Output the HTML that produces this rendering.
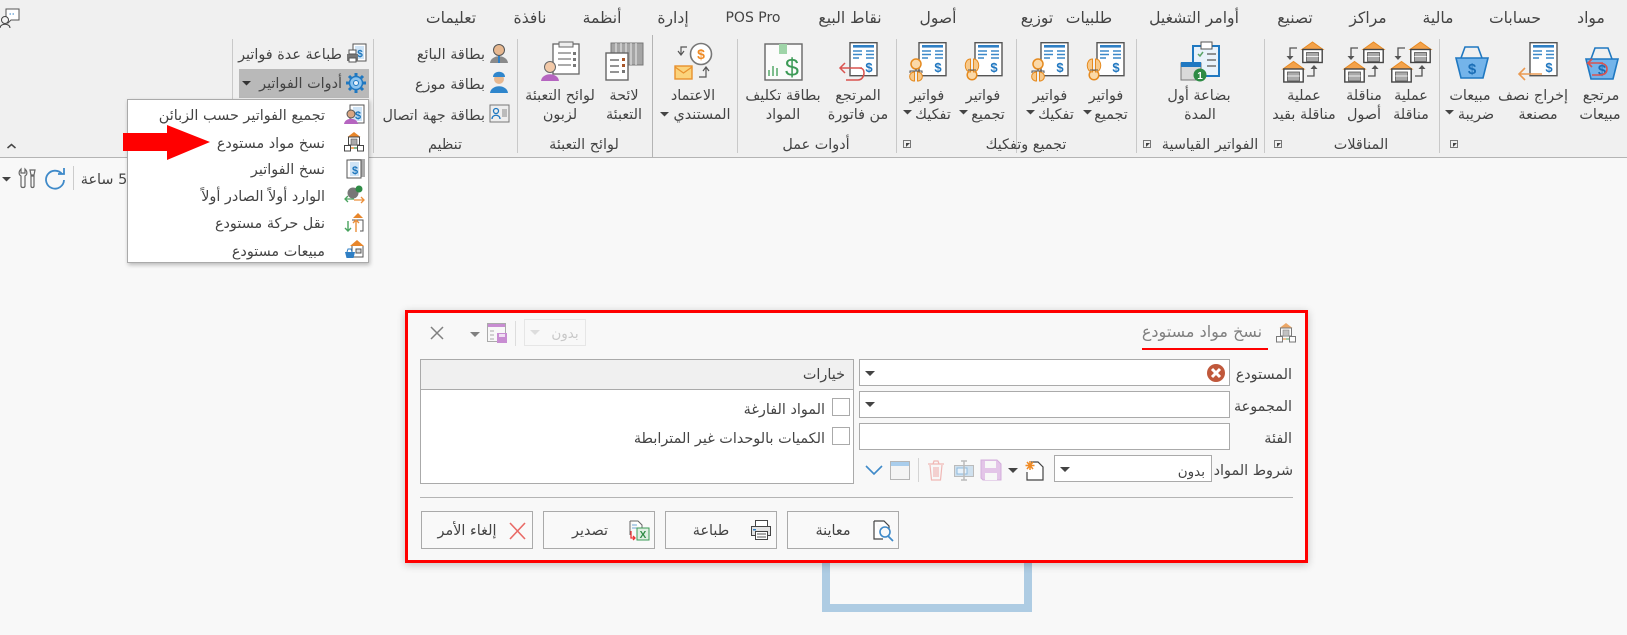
<!DOCTYPE html>
<html lang="ar"><head><meta charset="utf-8"><title>نسخ مواد مستودع</title>
<style>
html,body{margin:0;padding:0;background:#f8f8f8}
body{position:relative;width:1627px;height:635px;overflow:hidden;font-family:"DejaVu Sans","Liberation Sans",sans-serif;font-size:14.4px;color:#444}
.a{position:absolute;box-sizing:border-box}
.c{position:absolute;width:160px;margin-left:-80px;margin-top:-8px;text-align:center;line-height:18px;white-space:nowrap;direction:rtl}
.r{position:absolute;margin-top:-8px;line-height:18px;white-space:nowrap;direction:rtl;text-align:right}
.s{position:absolute;width:1px;top:39px;height:114px;background:#c9c9c9}
.f{position:absolute;box-sizing:border-box;background:#fff;border:1px solid #aaa}
.b{position:absolute;box-sizing:border-box;top:511px;height:38px;border:1px solid #aaa;background:#f9f9f9}
svg{position:absolute;left:0;top:0;overflow:visible}
</style></head><body>
<!-- ribbon -->
<div class="a" style="left:0;top:0;width:1627px;height:158px;background:#f0f0f0;border-bottom:1px solid #b4b4b4"></div>
<div class="a" style="left:822px;top:560px;width:210px;height:52px;background:#f9f9f9;border:8px solid #aecce3;border-top:0"></div>
<div class="s" style="left:1439px"></div><div class="s" style="left:1264px"></div><div class="s" style="left:1136px"></div><div class="s" style="left:1016px"></div><div class="s" style="left:896px"></div><div class="s" style="left:737px"></div><div class="s" style="left:652px;top:35px;height:122px;background:#b4b4b4"></div><div class="s" style="left:517px"></div><div class="s" style="left:373px"></div><div class="s" style="left:232px"></div>
<div class="a" style="left:239px;top:69px;width:130px;height:29px;background:#b9b9b9"></div>

<!-- menu -->
<div style="font-size:15.6px;color:#444">
<div class="c" style="left:1591px;top:17px">مواد</div><div class="c" style="left:1515px;top:17px">حسابات</div><div class="c" style="left:1438px;top:17px">مالية</div><div class="c" style="left:1368px;top:17px">مراكز</div><div class="c" style="left:1295px;top:17px">تصنيع</div><div class="c" style="left:1194px;top:17px">أوامر التشغيل</div><div class="c" style="left:1089px;top:17px">طلبيات</div><div class="c" style="left:1037px;top:17px">توزيع</div><div class="c" style="left:938px;top:17px">أصول</div><div class="c" style="left:850px;top:17px">نقاط البيع</div><div class="c" style="left:753px;top:17px;direction:ltr;font-size:14px">POS Pro</div><div class="c" style="left:673px;top:17px">إدارة</div><div class="c" style="left:602px;top:17px">أنظمة</div><div class="c" style="left:530px;top:17px">نافذة</div><div class="c" style="left:451px;top:17px">تعليمات</div>
</div>

<!-- ribbon labels -->
<div class="c" style="left:1601px;top:95px">مرتجع</div><div class="c" style="left:1600px;top:114px">مبيعات</div>
<div class="c" style="left:1533px;top:95px">إخراج نصف</div><div class="c" style="left:1538px;top:114px">مصنعة</div>
<div class="c" style="left:1470px;top:95px">مبيعات</div><div class="c" style="left:1476px;top:114px">ضريبة</div>
<div class="c" style="left:1411px;top:95px">عملية</div><div class="c" style="left:1411px;top:114px">مناقلة</div>
<div class="c" style="left:1364px;top:95px">مناقلة</div><div class="c" style="left:1364px;top:114px">أصول</div>
<div class="c" style="left:1304px;top:95px">عملية</div><div class="c" style="left:1304px;top:114px">مناقلة بقيد</div>
<div class="c" style="left:1199px;top:95px">بضاعة أول</div><div class="c" style="left:1200px;top:114px">المدة</div>
<div class="c" style="left:1106px;top:95px">فواتير</div><div class="c" style="left:1111px;top:114px">تجميع</div>
<div class="c" style="left:1050px;top:95px">فواتير</div><div class="c" style="left:1056px;top:114px">تفكيك</div>
<div class="c" style="left:983px;top:95px">فواتير</div><div class="c" style="left:988px;top:114px">تجميع</div>
<div class="c" style="left:927px;top:95px">فواتير</div><div class="c" style="left:933px;top:114px">تفكيك</div>
<div class="c" style="left:858px;top:95px">المرتجع</div><div class="c" style="left:858px;top:114px">من فاتورة</div>
<div class="c" style="left:783px;top:95px">بطاقة تكليف</div><div class="c" style="left:783px;top:114px">المواد</div>
<div class="c" style="left:693px;top:95px">الاعتماد</div><div class="c" style="left:702px;top:114px">المستندي</div>
<div class="c" style="left:624px;top:95px">لائحة</div><div class="c" style="left:624px;top:114px">التعبئة</div>
<div class="c" style="left:560px;top:95px">لوائح التعبئة</div><div class="c" style="left:560px;top:114px">لزبون</div>
<div class="c" style="left:1210px;top:144px">الفواتير القياسية</div>
<div class="c" style="left:1361px;top:144px">المناقلات</div>
<div class="c" style="left:1026px;top:144px">تجميع وتفكيك</div>
<div class="c" style="left:816px;top:144px">أدوات عمل</div>
<div class="c" style="left:584px;top:144px">لوائح التعبئة</div>
<div class="c" style="left:445px;top:144px">تنظيم</div>
<div class="r" style="right:1142px;top:54px">بطاقة البائع</div>
<div class="r" style="right:1142px;top:84px">بطاقة موزع</div>
<div class="r" style="right:1142px;top:115px">بطاقة جهة اتصال</div>
<div class="r" style="right:1285px;top:54px">طباعة عدة فواتير</div>
<div class="r" style="right:1285px;top:83px">أدوات الفواتير</div>
<div class="c" style="left:104px;top:179px">5 ساعة</div>

<!-- dialog -->
<div class="a" style="left:405px;top:310px;width:903px;height:253px;border:3px solid #f00;background:#f8f8f8;box-shadow:0 2px 8px rgba(0,0,0,.22)"></div>
<div class="a" style="left:1142px;top:348px;width:126px;height:2px;background:#f00"></div>
<div class="c" style="left:1202px;top:331px;font-size:16px;color:#808080">نسخ مواد مستودع</div>
<div class="f" style="left:524px;top:319px;width:62px;height:27px;background:#f8f8f8;border-color:#e6e6e6"></div>
<div class="c" style="left:565px;top:333px;color:#c8c8c8;font-size:13.5px">بدون</div>
<div class="a" style="left:515px;top:321px;width:1px;height:25px;background:#ddd"></div>

<div class="f" style="left:859px;top:359px;width:371px;height:27px"></div>
<div class="f" style="left:859px;top:391px;width:371px;height:27px"></div>
<div class="f" style="left:859px;top:423px;width:371px;height:27px"></div>
<div class="f" style="left:1054px;top:455px;width:158px;height:27px"></div>
<div class="r" style="right:335px;top:374px">المستودع</div>
<div class="r" style="right:335px;top:406px">المجموعة</div>
<div class="r" style="right:335px;top:438px">الفئة</div>
<div class="r" style="right:334px;top:470px">شروط المواد</div>
<div class="r" style="right:422px;top:471px;font-size:13.5px">بدون</div>

<div class="f" style="left:420px;top:359px;width:434px;height:125px"></div>
<div class="a" style="left:421px;top:360px;width:432px;height:30px;background:#f0f0f0;border-bottom:1px solid #aaa"></div>
<div class="r" style="right:782px;top:374px">خيارات</div>
<div class="f" style="left:832px;top:398px;width:18px;height:18px"></div>
<div class="f" style="left:832px;top:427px;width:18px;height:18px"></div>
<div class="r" style="right:802px;top:409px">المواد الفارغة</div>
<div class="r" style="right:802px;top:438px">الكميات بالوحدات غير المترابطة</div>

<div class="a" style="left:420px;top:497px;width:873px;height:1px;background:#b4b4b4"></div>
<div class="b" style="left:421px;width:112px"></div><div class="b" style="left:543px;width:112px"></div><div class="b" style="left:665px;width:112px"></div><div class="b" style="left:787px;width:112px"></div>
<div class="c" style="left:467px;top:530px">إلغاء الأمر</div>
<div class="c" style="left:590px;top:530px">تصدير</div>
<div class="c" style="left:711px;top:530px">طباعة</div>
<div class="c" style="left:833px;top:530px">معاينة</div>

<!-- popup -->
<div class="a" style="left:127px;top:99px;width:242px;height:164px;background:#fff;border:1px solid #aaa;box-shadow:1px 2px 4px rgba(0,0,0,.25)"></div>
<div class="r" style="right:1302px;top:115px">تجميع الفواتير حسب الزبائن</div>
<div class="r" style="right:1302px;top:143px">نسخ مواد مستودع</div>
<div class="r" style="right:1302px;top:169px">نسخ الفواتير</div>
<div class="r" style="right:1302px;top:196px">الوارد أولاً الصادر أولاً</div>
<div class="r" style="right:1302px;top:223px">نقل حركة مستودع</div>
<div class="r" style="right:1302px;top:251px">مبيعات مستودع</div>

<!-- icons -->
<svg width="1627" height="635" viewBox="0 0 1627 635" fill="none">
<defs>
<g id="inv"><rect x="10" y=".7" width="27" height="33" fill="#fff" stroke="#555" stroke-width="1.4"/><rect x="13" y="3" width="21" height="2.6" fill="#2f7fc4"/><path d="M13 9h9M13 12.500h9M13 16h6M26 9h8M26 12.500h8M26 16h8" stroke="#3b88c8" stroke-width="1.500"/><text x="29" y="30" font-size="13" font-weight="bold" fill="#2077c0" text-anchor="middle" font-family="Liberation Sans">$</text></g>
<g id="bask"><path d="M6 12 10 1h13l4 11" stroke="#1f78c1" stroke-width="1.600"/><path d="M1 12h32l-5 20H6z" fill="#74b4ea" stroke="#1f78c1" stroke-width="1.600"/><text x="17" y="28" font-size="15" font-weight="bold" fill="#1a6db5" text-anchor="middle" font-family="Liberation Sans">$</text></g>
<g id="house"><path d="M0 7.500 10.500 0 21 7.500z" fill="#f3a24a" stroke="#e88a22"/><rect x=".8" y="7.500" width="19.400" height="13" fill="#fff" stroke="#444" stroke-width="1.400"/><rect x="4.500" y="10.500" width="12" height="9" fill="#a9a9a9" stroke="#555" stroke-width=".8"/><path d="M4.500 14.500h12" stroke="#eee"/></g>
<g id="wh"><use href="#house" x="19" y="0"/><use href="#house" x="0" y="19.500"/><path d="M14 6H7v9" stroke="#555" stroke-width="1.300"/><path d="M3.500 14h7L7 18z" fill="#555"/><path d="M24 34h7v-8" stroke="#555" stroke-width="1.300"/><path d="M27.500 27h7L31 23z" fill="#555"/></g>
<g id="sc1"><circle cx="7" cy="33" r="4.800" fill="#fbd9a8" stroke="#e58a1f" stroke-width="1.500"/><path d="M5.500 30c-7 0-7-13 0-13zM8.500 30c7 0 7-13 0-13z" fill="#f8c98a" stroke="#e58a1f"/><path d="M3 28h8" stroke="#555"/></g>
<g id="sc2"><circle cx="7" cy="22" r="5" fill="#fbd9a8" stroke="#e58a1f" stroke-width="1.500"/><path d="M5.500 39c-6.500 0-6.500-9 0-9zM8.500 39c6.500 0 6.500-9 0-9z" fill="#f8c98a" stroke="#e58a1f"/><path d="M7 27v2M1 31v-2h12v2" stroke="#555"/></g>
<g id="tri"><path d="M0 0h9l-4.500 4.500z" fill="#444"/></g>
<g id="lau"><rect x=".5" y=".5" width="7" height="7" stroke="#777"/><path d="M3 7V3h4z" fill="#444"/></g>
<g id="small"><rect x="5" y="1" width="14" height="18" fill="#fff" stroke="#555"/><rect x="8" y="3" width="9" height="14" fill="#cfe4f6"/><text x="13" y="15" font-size="11" font-weight="bold" fill="#1b75bc" text-anchor="middle" font-family="Liberation Sans">$</text></g>
</defs>

<!-- top-left user -->
<path d="M6 9h13v11H11l-3 3v-3H6z" fill="#fff" stroke="#555"/><path d="M9.500 14h6" stroke="#2f7fc4" stroke-dasharray="1.500 1.500"/><circle cx="5" cy="20" r="3.500" fill="#f4f4f4" stroke="#444"/><path d="M0 28c0-5 10-5 10 0" stroke="#444"/>

<!-- ribbon icons -->
<use href="#bask" x="1585" y="47"/><path d="M1603 63h-15l4-4m-4 4 4 4M1598 63c7 0 9 3 9 6 0 4-3 6-8 6h-7" stroke="#d9534f" stroke-width="1.600"/>
<use href="#inv" x="1520" y="42"/><path d="M1542 74h-22m5-6-6 6 6 6" stroke="#ea9a52" stroke-width="1.600"/>
<use href="#bask" x="1455" y="46"/>
<use href="#wh" x="1391" y="42"/><use href="#wh" x="1344" y="42"/><use href="#wh" x="1283" y="42"/>
<rect x="1193" y="46" width="26" height="30" fill="#e8f2fb" stroke="#1f78c1" stroke-width="2"/><rect x="1201" y="42" width="11" height="7" fill="#fff" stroke="#555"/><path d="M1198 54l2 2 3-4" stroke="#5aa469" stroke-width="1.500"/><path d="M1207 54h9M1207 60h9M1207 66h9" stroke="#555" stroke-width="1.200"/><rect x="1181" y="63" width="20" height="17" fill="#d9d9d9" stroke="#777"/><rect x="1181" y="62" width="20" height="5" fill="#1f78c1"/><circle cx="1200" cy="75" r="6.500" fill="#2e8b45"/><text x="1200" y="79" font-size="10" font-weight="bold" fill="#fff" text-anchor="middle" font-family="Liberation Sans">1</text>
<use href="#inv" x="1087" y="42"/><use href="#sc1" x="1087" y="42"/>
<use href="#inv" x="1031" y="42"/><use href="#sc2" x="1031" y="42"/>
<use href="#inv" x="965" y="42"/><use href="#sc1" x="965" y="42"/>
<use href="#inv" x="909" y="42"/><use href="#sc2" x="909" y="42"/>
<use href="#inv" x="840" y="42"/><path d="M862 68h-21m4-5-5 5 5 5M850 68h9c4 0 5 2 5 5s-2 7-6 7h-12" stroke="#d9534f" stroke-width="1.500"/>
<rect x="765" y="44" width="37" height="36" fill="#fbfbfb" stroke="#666" stroke-width="1.400"/><rect x="779" y="44" width="8" height="10" fill="#9fd4a8"/><path d="M769 76v-6M773 76v-10M777 76v-8" stroke="#4aa35f" stroke-width="1.400"/><text x="792" y="76" font-size="25" fill="#3c9a56" text-anchor="middle" font-family="Liberation Sans">$</text>
<circle cx="701" cy="54" r="10.500" fill="#fff" stroke="#777" stroke-width="1.600"/><text x="701" y="59" font-size="14" font-weight="bold" fill="#ef8a24" text-anchor="middle" font-family="Liberation Sans">$</text><rect x="675" y="66" width="17" height="13" fill="#fbd37c" stroke="#e8912d" stroke-width="1.400"/><path d="M675 67l8.500 6 8.500-6" stroke="#e8912d" stroke-width="1.200"/><path d="M687 47h-6v7M678 51l3 4 3-4M699 77h7v-9M703 71l3-4 3 4" stroke="#555" stroke-width="1.200"/>
<rect x="611" y="43" width="32" height="22" fill="#a5a5a5" stroke="#777"/><path d="M616 43v22M621 43v22M626 43v22M631 43v22M636 43v22" stroke="#eee"/><rect x="606" y="53" width="22" height="27" fill="#fff" stroke="#666" stroke-width="1.400"/><path d="M610 60h9M610 66h9M610 72h9" stroke="#555" stroke-width="1.200"/><path d="M622 58h3v3h-3zM622 64h3v3h-3z" fill="#a8562a"/><path d="M622 70h3v3h-3z" fill="#777"/>
<rect x="553" y="44" width="26" height="30" fill="#fff" stroke="#666" stroke-width="1.300"/><rect x="559" y="42" width="14" height="5" fill="#eee" stroke="#666"/><path d="M558 53h13M558 59h13M558 65h13" stroke="#555"/><path d="M573 52h3v3h-3zM573 58h3v3h-3zM573 64h3v3h-3z" fill="#777"/>
<circle cx="550" cy="67" r="5.500" fill="#f2c9a8" stroke="#666"/><path d="M541 81c1-9 17-9 18 0z" fill="#b565c0"/>
<circle cx="499" cy="50" r="5.500" fill="#e7b890" stroke="#555"/><path d="M490 63c1-9 17-9 18 0z" fill="#8a8a8a"/><path d="M499 56v7" stroke="#2f7fc4" stroke-width="2"/>
<circle cx="499" cy="79" r="5" fill="#e7b890"/><path d="M493 77c0-7 12-7 12 0z" fill="#2f86cc"/><path d="M490 93c1-9 17-9 18 0z" fill="#2f86cc"/>
<rect x="490" y="105" width="19" height="17" fill="#eee" stroke="#777"/><circle cx="496" cy="111" r="2.500" stroke="#1f78c1" stroke-width="1.300"/><path d="M492 119c0-5 8-5 8 0" stroke="#1f78c1" stroke-width="1.300"/><rect x="502" y="109" width="5" height="8" fill="#bbb"/>
<rect x="353" y="44" width="13" height="17" fill="#fff" stroke="#555"/><rect x="355" y="46" width="9" height="13" fill="#cfe4f6"/><text x="360" y="57" font-size="10" font-weight="bold" fill="#1b75bc" text-anchor="middle" font-family="Liberation Sans">$</text><rect x="347" y="54" width="11" height="7" fill="#777"/><rect x="349" y="50" width="7" height="4" fill="#fff" stroke="#555"/><rect x="349" y="58" width="7" height="4" fill="#fff" stroke="#555"/>
<g transform="translate(356 83)"><circle r="6.500" fill="#8cc3ee" stroke="#1f78c1" stroke-width="1.500"/><circle r="2.500" fill="#e8f2fb" stroke="#1f78c1"/><path d="M0-10V-7M0 10V7M-10 0H-7M10 0H7M-7-7l2 2M7 7 5 5M-7 7l2-2M7-7 5-5" stroke="#1f78c1" stroke-width="3"/></g>
<!-- ribbon arrows + launchers -->
<use href="#tri" x="1445" y="110"/><use href="#tri" x="1083" y="110"/><use href="#tri" x="1026" y="110"/><use href="#tri" x="959" y="110"/><use href="#tri" x="903" y="110"/><use href="#tri" x="660" y="112"/>
<path d="M242 81h9l-4.500 4.500z" fill="#333"/>
<use href="#lau" x="1450" y="140"/><use href="#lau" x="1274" y="140"/><use href="#lau" x="1143" y="140"/><use href="#lau" x="903" y="140"/>
<path d="M7.500 148l4-3.500 4 3.500" stroke="#444" stroke-width="1.500"/>
<!-- status row -->
<path d="M2 177h9l-4.500 4.500z" fill="#444"/><path d="M21 169c-3 3-2 6 0 7v10c0 2 4 2 4 0v-10c2-1 3-4 0-7v4h-4zM30 170h5l-1 5h-3zM31 176h3v10c0 2-3 2-3 0z" stroke="#666" stroke-width="1.200"/>
<path d="M62 174a9 9 0 1 0 2 6" stroke="#3f8ac9" stroke-width="1.800"/><path d="M58 174h6v-6" stroke="#3f8ac9" stroke-width="1.800"/><rect x="73" y="166" width="1" height="24" fill="#ccc"/>
<!-- popup icons -->
<g transform="translate(345 104)"><use href="#small" x="0" y="0"/><circle cx="6" cy="10" r="4" fill="#d8a582" stroke="#555"/><path d="M-1 20c1-7 13-7 14 0z" fill="#b565c0"/></g>
<g id="copywh" transform="translate(344 132)"><path d="M3.500 5 10 0l6.500 5z" fill="#e8862a"/><rect x="4.500" y="5" width="11" height="8" fill="#fff" stroke="#444"/><rect x="7" y="7" width="6" height="6" fill="#aaa" stroke="#555" stroke-width=".6"/><rect x=".5" y="13.500" width="6" height="5.500" fill="#fff" stroke="#444"/><rect x="13.500" y="13.500" width="6" height="5.500" fill="#fff" stroke="#444"/><path d="M7 16h3" stroke="#ea8f3a" stroke-width="1.500"/><path d="M10 16h3" stroke="#5aa469" stroke-width="1.500"/></g>
<g transform="translate(344 158)"><rect x="6" y="1" width="15" height="18" fill="#aaa"/><use href="#small" x="-2" y="1"/></g>
<g transform="translate(344 185)"><circle cx="9" cy="8" r="5.500" fill="#777"/><circle cx="15" cy="4" r="3.500" fill="#2e8b45"/><path d="M10 14H1m3-3-3 3 3 3" stroke="#4aa35f" stroke-width="1.300"/><path d="M10 15h10m-3-3 3 3-3 3" stroke="#ea8f3a" stroke-width="1.300"/></g>
<g transform="translate(344 212)"><path d="M9 6l5-5 5 5" fill="#e8862a"/><path d="M8 8h11v11h-3" stroke="#555"/><path d="M4 9v10m-3-3 3 3 3-3" stroke="#4aa35f" stroke-width="1.400"/><path d="M12 20V8m-3 3 3-3 3 3" stroke="#ea8f3a" stroke-width="1.400"/></g>
<g transform="translate(344 239)"><path d="M6 7l7-6 7 6z" fill="#e8862a"/><path d="M8 7v11h11V7" stroke="#555"/><rect x="12" y="10" width="5" height="4" fill="#ddd" stroke="#555"/><path d="M1 13h10l-1.500 6h-7z" fill="#2f7fc4"/><path d="M3 13l1-3h3l1 3" stroke="#2f7fc4"/></g>
<path d="M123 133h44v-8l43 17-43 18v-9h-44z" fill="#f00"/>
<!-- dialog icons -->
<g transform="translate(1276 323)" opacity=".7"><use href="#copywh" x="-344" y="-132"/></g>
<path d="M431 327l12 12M443 327l-12 12" stroke="#808080" stroke-width="1.500"/>
<path d="M470 332h10l-5 5z" fill="#808080"/>
<rect x="487.500" y="323.500" width="18" height="18" fill="#f8f8f8" stroke="#aaa"/><rect x="488" y="324" width="17" height="3" fill="#c88dd2"/><path d="M490 331h4M490 335h4M490 339h4" stroke="#aaa"/><rect x="497" y="333" width="10" height="10" fill="#c88dd2"/><rect x="499" y="334" width="6" height="3" fill="#f0dff3"/>
<path d="M530 330h10l-5 5z" fill="#ddd"/>
<circle cx="1216" cy="373" r="9" fill="#c0583b"/><path d="M1212 369l8 8M1220 369l-8 8" stroke="#fff" stroke-width="3"/>
<path d="M865 371h10l-5 5zM865 402h10l-5 5zM1060 467h10l-5 5z" fill="#444"/>
<path d="M1031 462h7l5 5v13h-16v-8" fill="#fff" stroke="#444" stroke-width="1.200"/><path d="M1030 461v9M1025.500 465.500h9M1027 462l6 7M1033 462l-6 7" stroke="#ef8a24" stroke-width="1.500"/>
<path d="M1008 468h10l-5 5z" fill="#444"/>
<path d="M981 460h16l4 4v16h-18l-2-2z" fill="#e3c5e8" stroke="#d3aedb"/><rect x="985" y="461" width="11" height="7" fill="#f7f7f7"/><rect x="985" y="473" width="12" height="7" fill="#f7f7f7"/>
<rect x="954.500" y="465.500" width="19" height="11" fill="#cfe0ee" stroke="#bbb"/><rect x="957" y="468" width="10" height="6" fill="#e8f2fb" stroke="#8fbadc"/><path d="M964 461v19M961 461h6M961 480h6" stroke="#bbb" stroke-width="1.500"/>
<path d="M930 465l1.500 15h9l1.500-15M928 464h16M933 464l1-3h4l1 3M934 467v10M936 467v10M938 467v10" stroke="#f0b7b5" stroke-width="1.200"/>
<rect x="918" y="458" width="1" height="24" fill="#d4d4d4"/>
<rect x="890.500" y="461.500" width="19" height="18" fill="#f4f4f4" stroke="#b5b5b5"/><rect x="891" y="462" width="18" height="4" fill="#a9cdec"/>
<path d="M866 466l8 8 8-8" stroke="#3f8ac9" stroke-width="1.600"/>
<path d="M510 523l15 16M525 523l-15 16" stroke="#e96a66" stroke-width="1.600"/>
<path d="M630 521h8l4 4v3" stroke="#666" fill="#fff"/><path d="M630 521v14" stroke="#666"/><path d="M632 525h5M632 528h5" stroke="#6fa8d8"/><path d="M631 531v7h4m-2-2 2 2-2 2" stroke="#e33" stroke-width="1.300"/><rect x="637" y="528" width="12" height="12" fill="#dff0e3" stroke="#3c9a56"/><text x="643" y="538" font-size="10" font-weight="bold" fill="#2e8b45" text-anchor="middle" font-family="Liberation Sans">X</text>
<rect x="755.500" y="520.500" width="12" height="7" fill="#fff" stroke="#444"/><rect x="751.500" y="526.500" width="19" height="9" fill="#e4e4e4" stroke="#444"/><rect x="755.500" y="531.500" width="12" height="8" fill="#fff" stroke="#444"/><path d="M757 534h9M757 537h9" stroke="#555"/><rect x="753" y="529" width="3" height="1.500" fill="#2f7fc4"/>
<path d="M874 521h10l5 5v3M874 521v18h9" fill="#fff" stroke="#444" stroke-width="1.200"/><circle cx="885" cy="532" r="5" stroke="#3f8ac9" stroke-width="1.600"/><path d="M888 536l5 5" stroke="#3f8ac9" stroke-width="1.800"/>
</svg>
</body></html>
